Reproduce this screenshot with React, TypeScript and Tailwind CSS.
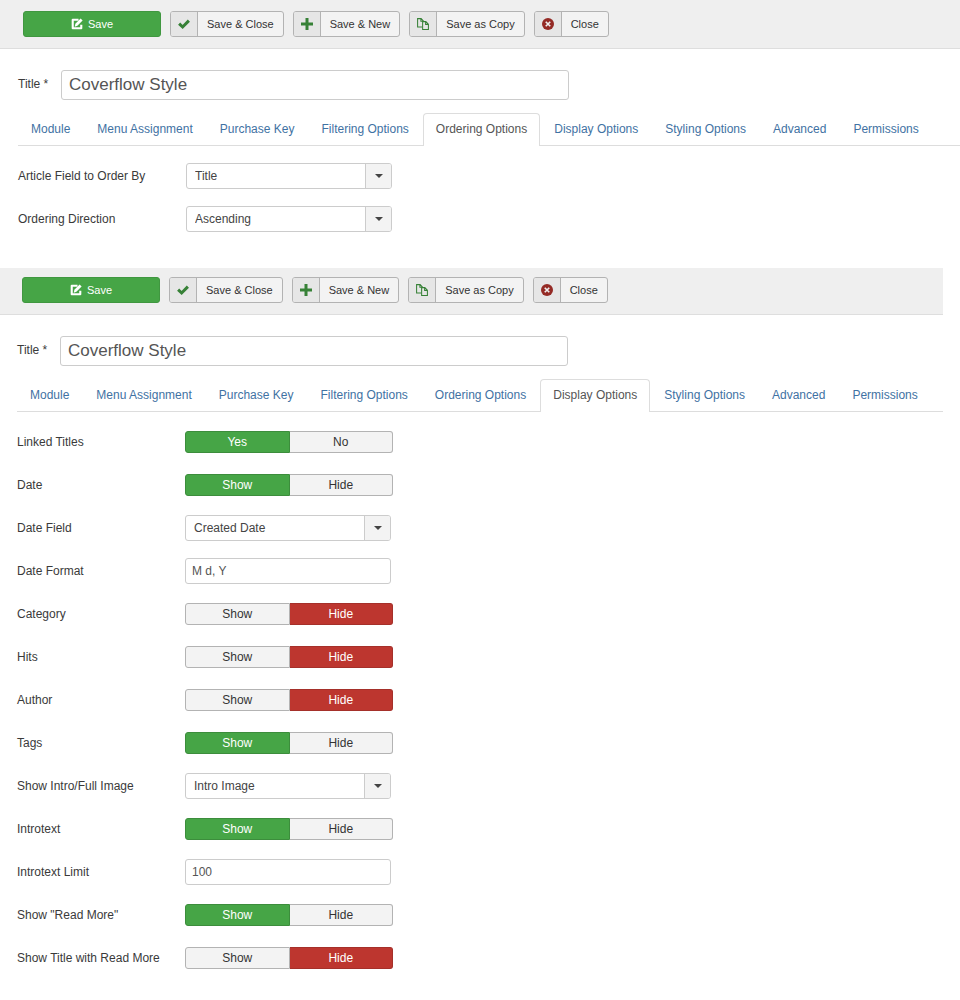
import React, { useId, useState } from "react";

const TABS = [
  "Module",
  "Menu Assignment",
  "Purchase Key",
  "Filtering Options",
  "Ordering Options",
  "Display Options",
  "Styling Options",
  "Advanced",
  "Permissions",
];

const EditIcon = () => (
  <svg viewBox="0 0 16 16" className="h-3 w-3" fill="none" stroke="currentColor">
    <path d="M10 2.300H2.300v11.400h11.400V9" strokeWidth="2.800" strokeLinejoin="round" />
    <path d="M5 11.500l.8-3.800L12.800.7l2.700 2.700-7 7z" fill="currentColor" stroke="none" />
  </svg>
);

const CheckIcon = () => (
  <svg viewBox="0 0 16 16" className="h-3 w-3 text-[#378137]" fill="none" stroke="currentColor">
    <path d="M1.500 7.500l4.700 4.500 8.300-8.500" strokeWidth="4" />
  </svg>
);

const PlusIcon = () => (
  <svg viewBox="0 0 16 16" className="h-3 w-3 text-[#378137]" fill="currentColor">
    <path d="M6 0h4v6h6v4h-6v6H6v-6H0V6h6z" />
  </svg>
);

const CopyIcon = () => (
  <svg viewBox="0 0 16 16" className="h-3 w-3 text-[#378137]" fill="none" stroke="currentColor" strokeWidth="1.400">
    <path d="M7 12H.8V.8h4.700L8.500 4v1M5.200 1v3.300h3" />
    <path d="M7.500 4.800h4.300l3.400 3.400v7H7.500zM11.500 5v3.500h3.500" />
  </svg>
);

const CloseIcon = () => (
  <svg viewBox="0 0 16 16" className="h-3 w-3" fill="none">
    <circle cx="8" cy="8" r="8" fill="#942a25" />
    <path d="M5 5l6 6M11 5l-6 6" stroke="#eee" strokeWidth="2.200" />
  </svg>
);

function ToolbarButton({ icon, label }: { icon: React.ReactNode; label: string }) {
  return (
    <button
      type="button"
      className="flex h-[26px] overflow-hidden rounded-[3px] border border-[#b3b3b3] bg-[#f3f3f3]"
    >
      <span className="flex h-full w-[27px] items-center justify-center border-r border-[#b3b3b3] bg-[#e6e6e6]">
        {icon}
      </span>
      <span className="flex h-full items-center px-[9px]">{label}</span>
    </button>
  );
}

function Toolbar({ className }: { className: string }) {
  return (
    <div
      className={`flex flex-wrap gap-[9px] border-b border-[#dedede] bg-[#efefef] pb-[11px] text-[11px] text-[#333] ${className}`}
    >
      <button
        type="button"
        className="flex h-[26px] w-[138px] items-center justify-center gap-[5px] rounded-[3px] border border-[#409740] bg-[#46a546] text-white"
      >
        <EditIcon />
        Save
      </button>
      <ToolbarButton icon={<CheckIcon />} label="Save &amp; Close" />
      <ToolbarButton icon={<PlusIcon />} label="Save &amp; New" />
      <ToolbarButton icon={<CopyIcon />} label="Save as Copy" />
      <ToolbarButton icon={<CloseIcon />} label="Close" />
    </div>
  );
}

function TitleField() {
  const id = useId();
  return (
    <div className="mt-[21px] flex items-center">
      <label htmlFor={id} className="w-[43px] shrink-0 pb-0.5">
        Title *
      </label>
      <input
        id={id}
        type="text"
        defaultValue="Coverflow Style"
        className="h-[30px] w-full max-w-[508px] rounded-[3px] border border-[#ccc] bg-white px-[7px] text-[17px] text-[#555]"
      />
    </div>
  );
}

function Tabs({ active }: { active: string }) {
  return (
    <nav className="mt-[13px] flex gap-px border-b border-[#ddd]">
      {TABS.map((tab) => (
        <a
          key={tab}
          href="#"
          aria-current={tab === active ? "page" : undefined}
          className={
            tab === active
              ? "-mb-px flex h-[33px] items-center rounded-t border border-b-0 border-[#ddd] bg-white px-3 pb-0.5 whitespace-nowrap text-[#555]"
              : "-mb-px flex h-[33px] items-center border border-b-0 border-transparent px-3 pb-0.5 whitespace-nowrap text-[#3f72a3]"
          }
        >
          {tab}
        </a>
      ))}
    </nav>
  );
}

function Row({ label, htmlFor, children }: { label: string; htmlFor: string; children: React.ReactNode }) {
  return (
    <div className="flex h-[26px] items-center">
      <label htmlFor={htmlFor} className="w-[168px] shrink-0">
        {label}
      </label>
      {children}
    </div>
  );
}

function SelectRow({ label, options }: { label: string; options: string[] }) {
  const id = useId();
  return (
    <Row label={label} htmlFor={id}>
      <div className="relative w-[206px]">
        <select
          id={id}
          className="block h-[26px] w-full appearance-none rounded-[3px] border border-[#ccc] bg-white pr-8 pl-2 text-[#444]"
        >
          {options.map((o) => (
            <option key={o}>{o}</option>
          ))}
        </select>
        <span className="pointer-events-none absolute inset-y-px right-px flex w-[26px] items-center justify-center rounded-r-[2px] border-l border-[#ccc] bg-[#f3f3f3]">
          <svg viewBox="0 0 8 4" className="h-1 w-2" fill="#444">
            <path d="M0 0h8L4 4z" />
          </svg>
        </span>
      </div>
    </Row>
  );
}

function TextRow({ label, value }: { label: string; value: string }) {
  const id = useId();
  return (
    <Row label={label} htmlFor={id}>
      <input
        id={id}
        type="text"
        defaultValue={value}
        className="h-[26px] w-[206px] rounded-[3px] border border-[#ccc] bg-white px-[6px] text-[#555]"
      />
    </Row>
  );
}

function ToggleRow({ label, options = ["Show", "Hide"], on }: { label: string; options?: string[]; on: boolean }) {
  const id = useId();
  const [selected, setSelected] = useState(on ? 0 : 1);
  return (
    <div role="radiogroup" className="flex h-[26px] items-center" aria-labelledby={`${id}-label`}>
      <span id={`${id}-label`} className="w-[168px] shrink-0">
        {label}
      </span>
      <div className="relative flex w-[208px]">
        {options.map((option, i) => {
          let colors = "border-[#b3b3b3] bg-[#f3f3f3] text-[#333]";
          if (selected === i) {
            colors = i === 0 ? "border-[#3c8d3c] bg-[#46a546] text-white" : "border-[#a5302a] bg-[#bd362f] text-white";
          }
          const shape = i === 0 ? "rounded-l-[3px]" : "rounded-r-[3px] border-l-0";
          return (
            <label key={option} className={`flex h-[22px] flex-1 items-center justify-center border ${shape} ${colors}`}>
              <input
                type="radio"
                name={id}
                checked={selected === i}
                onChange={() => setSelected(i)}
                className="sr-only"
              />
              {option}
            </label>
          );
        })}
      </div>
    </div>
  );
}

export default function App() {
  return (
    <div className="min-h-screen bg-white font-['Liberation_Sans',Arial,sans-serif] text-xs text-[#3a3a3a]">
      <section>
        <Toolbar className="px-[23px] pt-[11px]" />
        <div className="pl-[18px]">
          <TitleField />
          <Tabs active="Ordering Options" />
          <div className="flex flex-col gap-[17px] pt-[17px]">
            <SelectRow label="Article Field to Order By" options={["Title", "Created Date", "Ordering", "Hits"]} />
            <SelectRow label="Ordering Direction" options={["Ascending", "Descending"]} />
          </div>
        </div>
      </section>

      <section className="mt-9 mr-[17px]">
        <Toolbar className="px-[22px] pt-[9px]" />
        <div className="pl-[17px]">
          <TitleField />
          <Tabs active="Display Options" />
          <div className="flex flex-col gap-[17px] pt-[17px]">
            <ToggleRow label="Linked Titles" options={["Yes", "No"]} on />
            <ToggleRow label="Date" on />
            <SelectRow label="Date Field" options={["Created Date", "Modified Date", "Published Date"]} />
            <TextRow label="Date Format" value="M d, Y" />
            <ToggleRow label="Category" on={false} />
            <ToggleRow label="Hits" on={false} />
            <ToggleRow label="Author" on={false} />
            <ToggleRow label="Tags" on />
            <SelectRow label="Show Intro/Full Image" options={["Intro Image", "Full Image"]} />
            <ToggleRow label="Introtext" on />
            <TextRow label="Introtext Limit" value="100" />
            <ToggleRow label={'Show "Read More"'} on />
            <ToggleRow label="Show Title with Read More" on={false} />
          </div>
        </div>
      </section>
    </div>
  );
}
